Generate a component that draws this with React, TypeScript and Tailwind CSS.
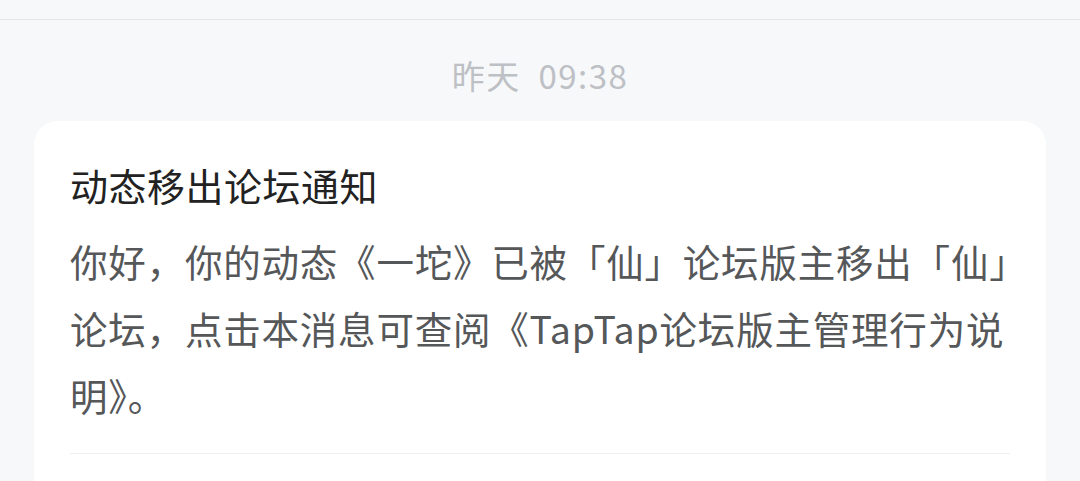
import React from 'react';

const font = { fontFamily: '"Noto Sans CJK SC", "Noto Sans", sans-serif' };

const App: React.FC = () => {
  return (
    <div className="w-[1080px] h-[481px] overflow-hidden bg-[#f7f8fa]" style={font}>
      <div className="h-[20px] border-b border-[#e3e4e6]" />
      <div className="h-[101px] flex items-center justify-center pt-[10px]">
        <span className="text-[33px] text-[#bdc0c4] tracking-[1.5px]">昨天&nbsp;&nbsp;09:38</span>
      </div>
      <div className="mx-[34px] bg-white rounded-[24px] px-[36px] pt-[38px]">
        <h2 className="text-[38px] leading-[52px] text-[#222222] font-normal tracking-[0.5px]">动态移出论坛通知</h2>
        <p className="mt-[16px] text-[37.5px] leading-[67px] text-[#555759] tracking-[0.8px]">
          你好，你的动态《一坨》已被「仙」论坛版主移出「仙」论坛，点击本消息可查阅《TapTap论坛版主管理行为说明》。
        </p>
        <div className="mt-[25px] border-t border-[#f0f0f0] h-[80px]" />
      </div>
    </div>
  );
};

export default App;
